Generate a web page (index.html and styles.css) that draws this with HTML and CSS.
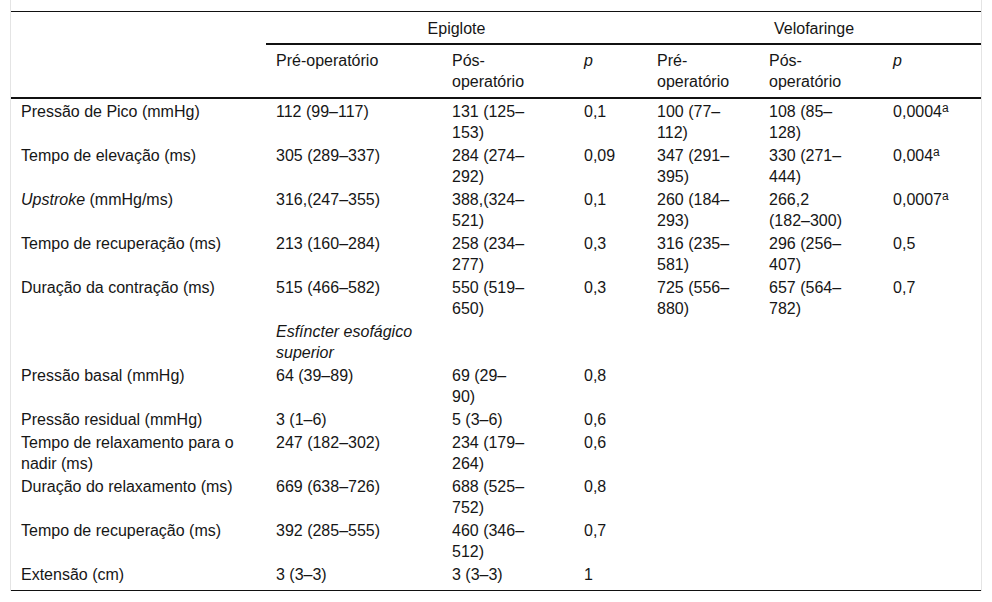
FILE: index.html
```html
<!DOCTYPE html>
<html lang="pt">
<head>
<meta charset="utf-8">
<title>Tabela</title>
<link rel="stylesheet" href="styles.css">
</head>
<body>
<div class="wrap">
<table class="data">
<colgroup>
<col class="c1"><col class="c2"><col class="c3"><col class="c4"><col class="c5"><col class="c6"><col class="c7">
</colgroup>
<thead>
<tr class="h1">
<th class="blank" rowspan="2"></th>
<th class="group" colspan="3">Epiglote</th>
<th class="group" colspan="3">Velofaringe</th>
</tr>
<tr class="h2">
<th>Pré-operatório</th>
<th>Pós-operatório</th>
<th><em>p</em></th>
<th>Pré-operatório</th>
<th>Pós-operatório</th>
<th><em>p</em></th>
</tr>
</thead>
<tbody>
<tr><td>Pressão de Pico (mmHg)</td><td>112 (99–117)</td><td>131 (125–153)</td><td>0,1</td><td>100 (77–112)</td><td>108 (85–128)</td><td>0,0004<sup>a</sup></td></tr>
<tr><td>Tempo de elevação (ms)</td><td>305 (289–337)</td><td>284 (274–292)</td><td>0,09</td><td>347 (291–395)</td><td>330 (271–444)</td><td>0,004<sup>a</sup></td></tr>
<tr><td><em>Upstroke</em> (mmHg/ms)</td><td>316,(247–355)</td><td>388,(324–521)</td><td>0,1</td><td>260 (184–293)</td><td>266,2 (182–300)</td><td>0,0007<sup>a</sup></td></tr>
<tr><td>Tempo de recuperação (ms)</td><td>213 (160–284)</td><td>258 (234–277)</td><td>0,3</td><td>316 (235–581)</td><td>296 (256–407)</td><td>0,5</td></tr>
<tr><td>Duração da contração (ms)</td><td>515 (466–582)</td><td>550 (519–650)</td><td>0,3</td><td>725 (556–880)</td><td>657 (564–782)</td><td>0,7</td></tr>
<tr><td></td><td><em>Esfíncter esofágico superior</em></td><td></td><td></td><td></td><td></td><td></td></tr>
<tr><td>Pressão basal (mmHg)</td><td>64 (39–89)</td><td>69 (29–90)</td><td>0,8</td><td></td><td></td><td></td></tr>
<tr><td>Pressão residual (mmHg)</td><td>3 (1–6)</td><td>5 (3–6)</td><td>0,6</td><td></td><td></td><td></td></tr>
<tr><td>Tempo de relaxamento para o nadir (ms)</td><td>247 (182–302)</td><td>234 (179–264)</td><td>0,6</td><td></td><td></td><td></td></tr>
<tr><td>Duração do relaxamento (ms)</td><td>669 (638–726)</td><td>688 (525–752)</td><td>0,8</td><td></td><td></td><td></td></tr>
<tr><td>Tempo de recuperação (ms)</td><td>392 (285–555)</td><td>460 (346–512)</td><td>0,7</td><td></td><td></td><td></td></tr>
<tr class="last"><td>Extensão (cm)</td><td>3 (3–3)</td><td>3 (3–3)</td><td>1</td><td></td><td></td><td></td></tr>
</tbody>
</table>
</div>
</body>
</html>
```

FILE: styles.css
```css
html, body {
  margin: 0;
  padding: 0;
  background: #ffffff;
}

body {
  font-family: "Liberation Sans", Arial, sans-serif;
  font-size: 16px;
  color: #161616;
}

.wrap {
  margin-left: 10px;
  width: 970px;
  padding-top: 11px;
  border-left: 1px solid #e4e4e4;
  border-right: 1px solid #e4e4e4;
}

.data {
  width: 970px;
  table-layout: fixed;
  border-collapse: separate;
  border-spacing: 0;
  border-top: 1px solid #111;
  border-bottom: 1px solid #111;
  line-height: 21px;
}

.c1 { width: 255px; }
.c2 { width: 176px; }
.c3 { width: 132px; }
.c4 { width: 73px; }
.c5 { width: 112px; }
.c6 { width: 124px; }
.c7 { width: 98px; }

th, td {
  text-align: left;
  vertical-align: top;
  font-weight: normal;
  padding: 2px 24px 0 10px;
}

tbody td:nth-child(3) {
  padding-right: 47px;
}

tbody td:nth-child(6) {
  padding-right: 34px;
}

.h1 th {
  padding-top: 6px;
  padding-bottom: 4px;
}

.h1 .group {
  text-align: center;
  padding-left: 0;
  padding-right: 0;
  border-bottom: 2px solid #111;
}

.h1 .blank {
  border-bottom: 2px solid #111;
}

.h2 th {
  padding-top: 5px;
  padding-bottom: 5px;
  border-bottom: 2px solid #111;
}

.last td {
  padding-bottom: 5px;
}

sup {
  font-size: 12px;
  line-height: 0;
  vertical-align: 5px;
}
```
